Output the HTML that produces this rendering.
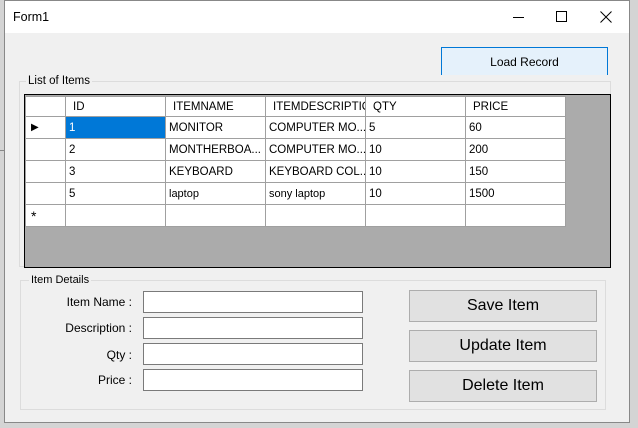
<!DOCTYPE html>
<html><head><style>
*{box-sizing:border-box;margin:0;padding:0}
body{width:638px;height:428px;background:#d4d4d4;position:relative;overflow:hidden;font-family:"Liberation Sans",Arial,sans-serif;font-size:12px;color:#000}
.a{position:absolute}
.win{left:4px;top:0;width:626px;height:423px;background:#f0f0f0;border:1px solid #888}
.title{left:0;top:0;width:624px;height:32px;background:#fff}
table{border-collapse:collapse;position:absolute;left:0;top:1px;table-layout:fixed;width:540px}
td{border:1px solid #a0a0a0;height:22px;padding:0 3px;white-space:nowrap;overflow:hidden;font-size:11.5px;background:#fff}
tr.h td{height:20px;padding-left:7px}
.tb{background:#fff;border:1px solid #7a7a7a;width:220px;height:22px}
.btn{background:#e1e1e1;border:1px solid #adadad;width:188px;height:32px;font-size:16px;text-align:center;line-height:30px}
.lbl{text-align:right;width:120px;font-size:12px}
</style></head><body>
<div class="a" style="left:0;top:150px;width:4px;height:1px;background:#888"></div>
<div class="a win">
 <div class="a title"></div>
 <div class="a" style="left:8px;top:9px;font-size:12.5px">Form1</div>
 <div class="a" style="left:508px;top:16px;width:11px;height:1px;background:#000"></div>
 <div class="a" style="left:551px;top:10px;width:11px;height:11px;border:1px solid #000"></div>
 <svg class="a" style="left:595px;top:10px" width="12" height="12"><path d="M0.5 0.5L11.5 11.5M11.5 0.5L0.5 11.5" stroke="#000" stroke-width="1"/></svg>
 <div class="a" style="left:436px;top:46px;width:167px;height:28px;background:#e5f1fb;border:1px solid #0078d7;border-bottom:none;text-align:center;line-height:28px;font-size:12px">Load Record</div>
 <div class="a" style="left:14px;top:80px;width:592px;height:186px;border:1px solid #dcdcdc"></div>
 <div class="a" style="left:21px;top:74px;background:#f0f0f0;padding:0 2px;font-size:11.5px">List of Items</div>
 <div class="a" style="left:19px;top:93px;width:587px;height:174px;background:#ababab;border:1px solid #000">
  <table>
   <colgroup><col style="width:40px"><col style="width:100px"><col style="width:100px"><col style="width:100px"><col style="width:100px"><col style="width:100px"></colgroup>
   <tr class="h"><td></td><td>ID</td><td>ITEMNAME</td><td>ITEMDESCRIPTIO</td><td>QTY</td><td>PRICE</td></tr>
   <tr><td style="font-size:10px;padding-left:5px">▶</td><td style="background:#0078d7;color:#fff">1</td><td>MONITOR</td><td>COMPUTER MO...</td><td>5</td><td>60</td></tr>
   <tr><td></td><td>2</td><td>MONTHERBOA...</td><td>COMPUTER MO...</td><td>10</td><td>200</td></tr>
   <tr><td></td><td>3</td><td>KEYBOARD</td><td>KEYBOARD COL...</td><td>10</td><td>150</td></tr>
   <tr><td></td><td>5</td><td style="font-size:11px">laptop</td><td style="font-size:11px">sony laptop</td><td>10</td><td>1500</td></tr>
   <tr><td style="font-size:14px;padding-left:5px">*</td><td></td><td></td><td></td><td></td><td></td></tr>
  </table>
 </div>
 <div class="a" style="left:15px;top:279px;width:586px;height:130px;border:1px solid #dcdcdc"></div>
 <div class="a" style="left:24px;top:273px;background:#f0f0f0;padding:0 2px;font-size:11px">Item Details</div>
 <div class="a lbl" style="left:7px;top:294px">Item Name :</div>
 <div class="a lbl" style="left:7px;top:320px">Description :</div>
 <div class="a lbl" style="left:7px;top:347px">Qty :</div>
 <div class="a lbl" style="left:7px;top:372px">Price :</div>
 <div class="a tb" style="left:138px;top:290px"></div>
 <div class="a tb" style="left:138px;top:316px"></div>
 <div class="a tb" style="left:138px;top:342px"></div>
 <div class="a tb" style="left:138px;top:368px"></div>
 <div class="a btn" style="left:404px;top:289px">Save Item</div>
 <div class="a btn" style="left:404px;top:329px">Update Item</div>
 <div class="a btn" style="left:404px;top:369px">Delete Item</div>
</div>
</body></html>
